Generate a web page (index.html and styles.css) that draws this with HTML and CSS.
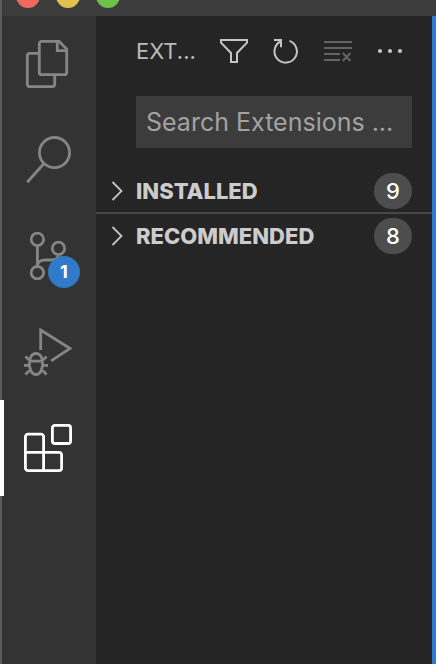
FILE: index.html
```html
<!DOCTYPE html>
<html lang="en">
<head>
<meta charset="utf-8">
<meta name="viewport" content="width=device-width, initial-scale=1">
<title>Extensions</title>
<link rel="stylesheet" href="styles.css">
</head>
<body>
<div class="window">
  <header class="titlebar">
    <svg class="lights" viewBox="0 0 104 8" aria-hidden="true">
      <circle cx="12" cy="-4" r="12" fill="#ee6a5f"/>
      <circle cx="52" cy="-4" r="12" fill="#e3c04c"/>
      <circle cx="92" cy="-4" r="12" fill="#71c048"/>
    </svg>
  </header>
  <div class="workbench">
    <nav class="activitybar" aria-label="Activity bar">
      <button class="activity" type="button" aria-label="Explorer">
        <svg class="activity-icon" viewBox="0 0 48 48">
          <path d="M15.3 13.3H5.8a2.5 2.5 0 0 0-2.5 2.5v28.4a2.5 2.5 0 0 0 2.5 2.5h22.4a2.5 2.5 0 0 0 2.5-2.5V35"/>
          <path d="M17.8 1.3H35l7.7 7.7v23.2a2.5 2.5 0 0 1-2.5 2.5H17.8a2.5 2.5 0 0 1-2.5-2.5V3.8a2.5 2.5 0 0 1 2.5-2.5zM33.3 1.3v9.4h9.4"/>
        </svg>
      </button>
      <button class="activity" type="button" aria-label="Search">
        <svg class="activity-icon" viewBox="0 0 48 48">
          <circle cx="30.5" cy="16.6" r="15.1"/>
          <path d="M20.2 27.2 3.2 46.3"/>
        </svg>
      </button>
      <button class="activity" type="button" aria-label="Source control, 1 pending change">
        <svg class="activity-icon" viewBox="0 0 48 48">
          <circle cx="13.4" cy="7.4" r="6.2"/>
          <circle cx="13.4" cy="40.7" r="6.2"/>
          <circle cx="34.5" cy="16.4" r="6.2"/>
          <path d="M13.4 13.6v20.9M13.4 34.5c0-4.5 3.500-6.500 7.500-6.500h6.600c4 0 7-2 7-5.400"/>
        </svg>
        <span class="activity-badge">1</span>
      </button>
      <button class="activity" type="button" aria-label="Run and debug">
        <svg class="activity-icon" viewBox="0 0 48 48">
          <path d="M16.700 22V2l29.300 18.500-18.800 12.300"/>
          <path d="M5.400 35.400c0-5.400 2-9.900 6.600-9.900s6.600 4.500 6.600 9.900c0 6-2.400 11.100-6.600 11.100s-6.600-5.100-6.600-11.100zM5.700 33.200h12.600M0 37.400h5.400M18.600 37.400H24M1.400 28.400l5 4.800M22.600 28.400l-5 4.800M1.400 46.600l5-5M22.600 46.600l-5-5"/>
        </svg>
      </button>
      <button class="activity activity-active" type="button" aria-label="Extensions" aria-current="page">
        <svg class="activity-icon" viewBox="0 0 48 48">
          <path d="M4 10.200h13a2.600 2.600 0 0 1 2.600 2.600v15.500H35a2.600 2.600 0 0 1 2.600 2.600V44a2.600 2.600 0 0 1-2.600 2.600H4A2.600 2.600 0 0 1 1.400 44V12.800A2.600 2.600 0 0 1 4 10.200zM1.400 28.300h18.200v18.300"/>
          <rect x="28.400" y="1.300" width="18.200" height="18.200" rx="2.600"/>
        </svg>
      </button>
    </nav>
    <main class="sidebar">
      <div class="pane-title">
        <h1 class="pane-name">EXT...</h1>
        <button class="action" type="button" aria-label="Filter extensions">
          <svg class="action-icon" viewBox="0 0 32 32"><path d="M3 5h26v2.600L19 18v9h-6v-9L3 7.600z"/></svg>
        </button>
        <button class="action" type="button" aria-label="Refresh">
          <svg class="action-icon" viewBox="0 0 32 32"><path d="M19.500 5.900A11.200 11.200 0 1 1 10.500 6.500M4 5h7v7.300"/></svg>
        </button>
        <button class="action action-disabled" type="button" aria-label="Clear search results" disabled>
          <svg class="action-icon" viewBox="0 0 32 32"><path d="M2 7h28M2 13h28M2 19h16M2 25h16M20.800 18l7.600 8M28.400 18l-7.600 8"/></svg>
        </button>
        <button class="action" type="button" aria-label="More actions">
          <svg class="action-icon action-dots" viewBox="0 0 32 32"><circle cx="6" cy="16" r="2.100"/><circle cx="16" cy="16" r="2.100"/><circle cx="26" cy="16" r="2.100"/></svg>
        </button>
      </div>
      <div class="search">
        <input class="search-input" type="text" aria-label="Search Extensions" placeholder="Search Extensions ...">
      </div>
      <div class="sections">
        <button class="section" type="button" aria-expanded="false">
          <svg class="chevron" viewBox="0 0 12 20"><path d="m1.500 1 9 9-9 9"/></svg>
          <span class="section-name">INSTALLED</span>
          <span class="count">9</span>
        </button>
        <button class="section" type="button" aria-expanded="false">
          <svg class="chevron" viewBox="0 0 12 20"><path d="m1.500 1 9 9-9 9"/></svg>
          <span class="section-name">RECOMMENDED</span>
          <span class="count">8</span>
        </button>
      </div>
    </main>
  </div>
</div>
</body>
</html>
```
FILE: styles.css
```css
* {
  box-sizing: border-box;
}

body {
  margin: 0;
  background: #252526;
  font-family: Inter, "Liberation Sans", sans-serif;
}

button {
  margin: 0;
  padding: 0;
  border: 0;
  background: none;
  color: inherit;
  font: inherit;
}

.window {
  position: relative;
  display: flex;
  flex-direction: column;
  min-height: 100vh;
}

/* Light edge along the left of the window */
.window::before {
  content: "";
  position: absolute;
  inset: 0 auto 0 0;
  width: 2px;
  background: #5c5c5c;
}

.titlebar {
  height: 16px;
  padding-left: 16px;
  background: #3c3c3c;
}

.lights {
  display: block;
  width: 104px;
  height: 8px;
}

.workbench {
  display: flex;
  flex: 1;
}

.activitybar {
  flex: none;
  width: 96px;
  background: #333333;
}

.activity {
  position: relative;
  display: flex;
  align-items: center;
  justify-content: center;
  width: 100%;
  height: 96px;
  color: #858585;
}

.activity-active {
  border-left: 4px solid #ffffff;
  padding-right: 4px;
  color: #ffffff;
}

.activity-icon {
  width: 48px;
  height: 48px;
  fill: none;
  stroke: currentColor;
  stroke-width: 2.8;
}

.activity-badge {
  position: absolute;
  right: 16px;
  bottom: 16px;
  width: 32px;
  height: 32px;
  border-radius: 50%;
  background: #2f7bc9;
  color: #ffffff;
  font-size: 18px;
  font-weight: 700;
  line-height: 32px;
  text-align: center;
}

.sidebar {
  flex: 1;
  min-width: 0;
  border-right: 4px solid #2f7bc9;
  background: #252526;
}

.pane-title {
  display: flex;
  align-items: center;
  gap: 20px;
  height: 70px;
  padding: 0 26px 0 40px;
}

.pane-name {
  flex: 1;
  margin: 0;
  color: #bbbbbb;
  font-size: 22px;
  font-weight: 400;
  line-height: 32px;
  white-space: nowrap;
}

.action {
  flex: none;
  width: 32px;
  height: 32px;
  color: #c5c5c5;
}

.action-disabled {
  color: #646465;
}

.action-icon {
  display: block;
  width: 32px;
  height: 32px;
  fill: none;
  stroke: currentColor;
  stroke-width: 2;
}

.action-dots {
  fill: currentColor;
  stroke: none;
}

.search {
  padding: 10px 20px 19px 40px;
}

.search-input {
  display: block;
  width: 100%;
  height: 52px;
  padding: 0 10px;
  border: 0;
  border-radius: 0;
  background: #3c3c3c;
  color: #cccccc;
  font: 25px Inter, "Liberation Sans", sans-serif;
}

.search-input::placeholder {
  color: #a2a2a2;
  opacity: 1;
}

.section {
  display: flex;
  align-items: center;
  width: 100%;
  height: 45px;
  padding: 0 20px 0 15px;
  border-top: 2px solid transparent;
  color: #cccccc;
  font-size: 22px;
  font-weight: 800;
  text-align: left;
}

.section + .section {
  border-top-color: #48484a;
}

.chevron {
  flex: none;
  width: 12px;
  height: 20px;
  margin-right: 13px;
  fill: none;
  stroke: #c5c5c5;
  stroke-width: 1.8;
}

.section-name {
  flex: 1;
}

.count {
  flex: none;
  min-width: 38px;
  height: 36px;
  border-radius: 18px;
  background: #4d4d4d;
  color: #ffffff;
  font-weight: 500;
  line-height: 36px;
  text-align: center;
}
```
